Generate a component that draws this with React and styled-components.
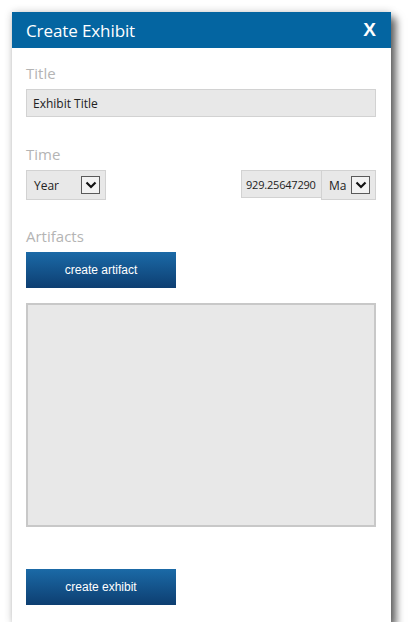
import React from "react";
import styled, { createGlobalStyle } from "styled-components";

const GlobalStyle = createGlobalStyle`
  body {
    margin: 0;
    background: #ffffff;
    font-family: "Open Sans", "Noto Sans", sans-serif;
  }
`;

function Chevron() {
  return (
    <ChevronBox>
      <svg width="12" height="8" viewBox="0 0 12 8">
        <path d="M1.5 1.5 L6 6 L10.5 1.5" fill="none" stroke="#111" strokeWidth="2.2" />
      </svg>
    </ChevronBox>
  );
}

export default function App() {
  return (
    <>
      <GlobalStyle />
      <Dialog>
        <Header>
          <HeaderTitle>Create Exhibit</HeaderTitle>
          <Close>X</Close>
        </Header>
        <Body>
          <Label>Title</Label>
          <TextField>Exhibit Title</TextField>

          <Label $top={27}>Time</Label>
          <TimeRow>
            <Select $width={80}>
              <SelectText>Year</SelectText>
              <Chevron />
            </Select>
            <Group>
              <NumberField>929.25647290</NumberField>
              <Select $width={55}>
                <SelectText>Ma</SelectText>
                <Chevron />
              </Select>
            </Group>
          </TimeRow>

          <Label $top={26}>Artifacts</Label>
          <Button>create artifact</Button>
          <ArtifactList />

          <Button $top={42}>create exhibit</Button>
        </Body>
      </Dialog>
    </>
  );
}

const Dialog = styled.div`
  margin: 12px 0 0 12px;
  width: 379px;
  background: #ffffff;
  box-shadow: 5px 6px 8px rgba(0, 0, 0, 0.6), 0 0 8px rgba(0, 0, 0, 0.18);
`;

const Header = styled.div`
  height: 36px;
  background: #0465a1;
  display: flex;
  align-items: center;
  justify-content: space-between;
  padding: 0 14px;
  color: #ffffff;
`;

const HeaderTitle = styled.div`
  font-size: 17px;
  letter-spacing: -0.1px;
`;

const Close = styled.div`
  font-family: "Liberation Sans", Arial, sans-serif;
  font-weight: bold;
  font-size: 19px;
  padding-right: 1px;
`;

const Body = styled.div`
  padding: 15px 15px 17px 14px;
  display: flex;
  flex-direction: column;
  align-items: flex-start;
`;

const Label = styled.div`
  font-size: 15px;
  line-height: 20px;
  color: #b4b4b4;
  margin-top: ${({ $top }) => $top || 0}px;
  margin-bottom: 6px;
`;

const TextField = styled.div`
  align-self: stretch;
  box-sizing: border-box;
  height: 28px;
  background: #e8e8e8;
  border: 1px solid #d2d2d2;
  font-size: 12px;
  color: #222;
  display: flex;
  align-items: center;
  padding-left: 6px;
`;

const TimeRow = styled.div`
  align-self: stretch;
  display: flex;
  justify-content: space-between;
  align-items: flex-start;
`;

const Group = styled.div`
  display: flex;
  align-items: flex-start;
`;

const Select = styled.div`
  box-sizing: border-box;
  width: ${({ $width }) => $width}px;
  height: 30px;
  background: #e8e8e8;
  border: 1px solid #d2d2d2;
  display: flex;
  align-items: center;
  justify-content: space-between;
  padding: 0 5px 0 7px;
`;

const SelectText = styled.span`
  font-size: 12px;
  color: #222;
`;

const ChevronBox = styled.div`
  box-sizing: border-box;
  width: 19px;
  height: 18px;
  border: 1px solid #5a5a5a;
  background: #f2f2f2;
  display: flex;
  align-items: center;
  justify-content: center;
`;

const NumberField = styled.div`
  box-sizing: border-box;
  width: 80px;
  height: 28px;
  background: #e8e8e8;
  border: 1px solid #d2d2d2;
  border-right: none;
  font-size: 11px;
  letter-spacing: -0.2px;
  color: #222;
  display: flex;
  align-items: center;
  padding-left: 4px;
  white-space: nowrap;
`;

const Button = styled.div`
  width: 150px;
  height: 36px;
  margin-top: ${({ $top }) => $top || 0}px;
  background: linear-gradient(#1b6aa7, #0d3e71);
  color: #ffffff;
  font-family: "Liberation Sans", Arial, sans-serif;
  font-size: 12px;
  display: flex;
  align-items: center;
  justify-content: center;
`;

const ArtifactList = styled.div`
  align-self: stretch;
  box-sizing: border-box;
  height: 224px;
  margin-top: 15px;
  background: #e8e8e8;
  border: 2px solid #c8c8c8;
`;
